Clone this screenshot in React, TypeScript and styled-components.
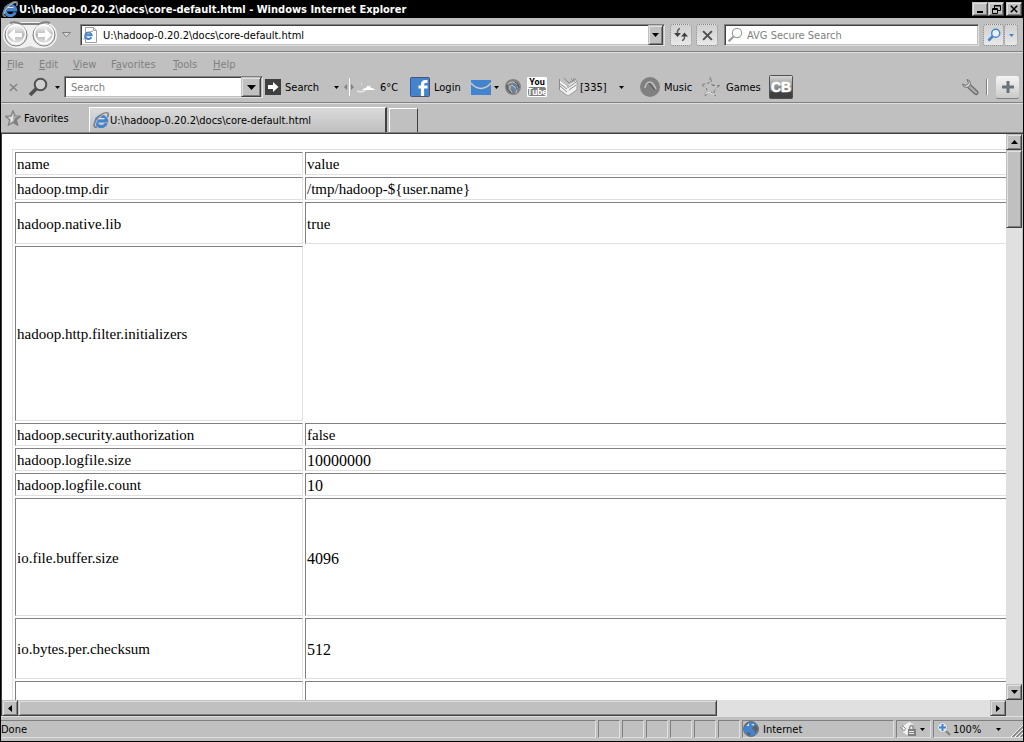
import React from "react";
import styled, { createGlobalStyle, css } from "styled-components";

const c = {
  face: "#c0c0c0",
  light: "#e0e0e0",
  shadow: "#808080",
  dark: "#404040",
  blue: "#4284d0",
};

const Global = createGlobalStyle`
  * { box-sizing: border-box; }
  html, body { margin: 0; height: 100%; }
  body, button, input {
    font-family: "DejaVu Sans Condensed", "Noto Sans", sans-serif;
    font-size: 11px;
    line-height: 15px;
    color: #000;
  }
  button { background: none; border: 0; padding: 0; }
  input { border: 0; padding: 0; outline: 0; background: none; min-width: 0; }
  svg { display: block; flex: none; }
`;

const raised = css`
  background: ${c.face};
  border: 1px solid;
  border-color: ${c.face} ${c.dark} ${c.dark} ${c.face};
  box-shadow: inset 1px 1px ${c.light}, inset -1px -1px ${c.shadow};
`;

const sunken = css`
  background: #fff;
  border: 1px solid;
  border-color: ${c.shadow} ${c.light} ${c.light} ${c.shadow};
  box-shadow: inset 1px 1px ${c.dark}, inset -1px -1px ${c.face};
`;

const Window = styled.div`
  display: flex;
  flex-direction: column;
  height: 100vh;
  overflow: hidden;
  background: ${c.face};
  border: solid #000;
  border-width: 0 1px 1px;
`;

const TitleBar = styled.header`
  display: flex;
  align-items: center;
  flex: none;
  height: 18px;
  padding: 0 0 0 1px;
  background: #000;
  color: #fff;
`;

const Title = styled.h1`
  flex: 1;
  margin: 0 0 0 1px;
  padding-top: 1px;
  font-size: 11px;
  line-height: 17px;
  font-weight: 700;
  white-space: nowrap;
`;

const CaptionButtons = styled.div`
  display: flex;
  padding-right: 1px;
`;

const CaptionButton = styled.button<{ $apart?: boolean }>`
  ${raised}
  display: grid;
  place-items: center;
  width: 16px;
  height: 14px;
  margin-left: ${(p) => (p.$apart ? 2 : 0)}px;
`;

const NavBar = styled.div`
  display: flex;
  align-items: center;
  flex: none;
  height: 35px;
  padding: 0 5px 0 2px;
  border-bottom: 1px solid ${c.light};
  box-shadow: inset 0 -1px ${c.shadow};
`;

const NavCluster = styled.div`
  display: flex;
  align-items: center;
  width: 77px;
`;

const Field = styled.label<{ $w?: number }>`
  ${sunken}
  display: flex;
  align-items: center;
  flex: ${(p) => (p.$w ? `0 1 ${p.$w}px` : "1 1 0")};
  height: 22px;
  min-width: 0;
  padding: 0 1px 0 2px;
`;

const FieldInput = styled.input`
  flex: 1;
  height: 18px;
  margin-left: 4px;
  padding-top: 1px;
  color: #000;
  &::placeholder { color: ${c.shadow}; opacity: 1; }
`;

const DropButton = styled.button<{ $w: number }>`
  ${raised}
  display: grid;
  place-items: center;
  flex: none;
  width: ${(p) => p.$w}px;
  height: 100%;
`;

const SoftButton = styled.button<{ $w: number }>`
  display: grid;
  place-items: center;
  flex: none;
  width: ${(p) => p.$w}px;
  height: 22px;
  border: 1px dotted ${c.shadow};
  border-radius: 3px;
  background: linear-gradient(#d0d0d0, #e8e8e8);
`;

const SoftGroup = styled.div`
  display: flex;
  margin-left: 4px;
`;

const NavActions = styled.div`
  display: flex;
  gap: 4px;
  padding: 0 6px 0 5px;
`;

const MenuBar = styled.nav`
  display: flex;
  flex: none;
  gap: 16px;
  height: 21px;
  padding: 4px 6px 0;
`;

const MenuItem = styled.button<{ $w: number }>`
  width: ${(p) => p.$w}px;
  height: 15px;
  text-align: left;
  color: ${c.shadow};
  white-space: nowrap;
`;

const ToolBar = styled.div`
  display: flex;
  align-items: center;
  flex: none;
  height: 30px;
  padding-right: 4px;
  padding-bottom: 3px;
  border-bottom: 1px solid ${c.light};
  box-shadow: inset 0 -1px ${c.shadow};
`;

const Tool = styled.button<{ $w: number; $gap?: number; $center?: boolean }>`
  display: flex;
  align-items: center;
  justify-content: ${(p) => (p.$center ? "center" : "flex-start")};
  gap: ${(p) => p.$gap ?? 4}px;
  flex: none;
  width: ${(p) => p.$w}px;
  height: 24px;
  padding-left: ${(p) => (p.$center ? 0 : 2)}px;
  white-space: nowrap;
`;

const ToolGroup = styled.div`
  display: flex;
  align-items: center;
  flex: none;
  margin-right: 9px;
`;

const Spacer = styled.div`
  flex: 1;
`;

const Divider = styled.span`
  width: 2px;
  height: 16px;
  margin: 0 8px 0 7px;
  background: ${c.shadow};
  border-right: 1px solid #fff;
`;

const AddButton = styled.button`
  display: grid;
  place-items: center;
  width: 23px;
  height: 23px;
  border-radius: 2px;
  border-bottom: 1px solid ${c.shadow};
  background: linear-gradient(#f4f4f4, #dcdcdc 60%, #c8c8c8);
`;

const TabStrip = styled.div`
  display: flex;
  align-items: flex-end;
  flex: none;
  height: 30px;
  border-bottom: 1px solid ${c.dark};
  box-shadow: inset 0 -1px ${c.shadow};
  padding-bottom: 1px;
`;

const FavoritesButton = styled.button`
  display: flex;
  align-items: center;
  gap: 3px;
  width: 88px;
  height: 28px;
  padding-left: 4px;
`;

const Tab = styled.button`
  display: flex;
  align-items: center;
  gap: 1px;
  width: 298px;
  height: 25px;
  padding-left: 3px;
  border-top: 1px solid #fff;
  border-left: 1px solid #fff;
  border-right: 2px solid ${c.dark};
  background: linear-gradient(#dadada, #c0c0c0);
  white-space: nowrap;
`;

const NewTab = styled.button`
  width: 29px;
  height: 24px;
  margin-left: 2px;
  border: solid;
  border-width: 1px 1px 0 1px;
  border-color: #fff ${c.dark} #fff #fff;
`;

const Content = styled.main`
  display: grid;
  grid-template-columns: minmax(0, 1fr) 17px;
  grid-template-rows: minmax(0, 1fr) 16px;
  flex: 1;
  min-height: 0;
  border-left: 1px solid ${c.dark};
`;

const Page = styled.div`
  overflow: hidden;
  background: #fff;
  padding: 15px 0 0 10px;
`;

const DataTable = styled.table`
  width: 1400px;
  table-layout: fixed;
  border: 1px solid;
  border-color: ${c.light} ${c.shadow} ${c.shadow} ${c.light};
  border-collapse: separate;
  border-spacing: 2px;
  font-family: "Liberation Serif", "Times New Roman", serif;
  font-size: 15px;
  line-height: 19px;
`;

const Row = styled.tr<{ $h: number }>`
  height: ${(p) => p.$h}px;
`;

const Cell = styled.td<{ $blank?: boolean; $numeric?: boolean }>`
  padding: 2px 1px 0;
  border: 1px solid;
  border-color: ${(p) =>
    p.$blank ? "transparent" : `${c.shadow} ${c.light} ${c.light} ${c.shadow}`};
  font-size: ${(p) => (p.$numeric ? 16 : 15)}px;
  text-align: left;
  font-weight: 400;
  vertical-align: middle;
`;

const NameCol = styled.col`
  width: 288px;
`;

const Scrollbar = styled.div<{ $vertical?: boolean }>`
  display: flex;
  flex-direction: ${(p) => (p.$vertical ? "column" : "row")};
  background: ${c.light};
  ${(p) => p.$vertical && css`border-right: 1px solid ${c.face};`}
`;

const ScrollButton = styled.button`
  ${raised}
  display: grid;
  place-items: center;
  flex: none;
  width: 16px;
  height: 16px;
`;

const ScrollThumb = styled.div<{ $share: string }>`
  ${raised}
  flex: 0 0 ${(p) => p.$share};
`;

const StatusBar = styled.footer`
  display: flex;
  flex: none;
  gap: 2px;
  height: 25px;
  padding: 3px 0;
  border-top: 1px solid ${c.light};
`;

const Panel = styled.div<{ $w?: number }>`
  display: flex;
  align-items: center;
  gap: 4px;
  flex: ${(p) => (p.$w ? `none` : "1 1 0")};
  width: ${(p) => (p.$w ? `${p.$w}px` : "auto")};
  border: 1px solid;
  border-color: ${c.shadow} ${c.light} ${c.light} ${c.shadow};
  white-space: nowrap;
`;

const DonePanel = styled(Panel)`
  border-left: 0;
`;

const PanelButton = styled.button<{ $w: number }>`
  display: flex;
  align-items: center;
  gap: 2px;
  width: ${(p) => p.$w}px;
  height: 16px;
  padding: 0 5px 0 3px;
  & > svg:last-child { margin-left: auto; }
`;

const ZoomPanel = styled(Panel)`
  border-right: 0;
  justify-content: space-between;
`;

const Caret = ({ size = 5, dir = "down", fill = "#000" }: { size?: number; dir?: "down" | "up" | "left" | "right"; fill?: string }) => {
  const h = (size + 1) / 2;
  const flat = dir === "down" || dir === "up";
  const d = {
    down: `M0 0H${size}L${size / 2} ${h}Z`,
    up: `M0 ${h}H${size}L${size / 2} 0Z`,
    left: `M${h} 0V${size}L0 ${size / 2}Z`,
    right: `M0 0V${size}L${h} ${size / 2}Z`,
  }[dir];
  return (
    <svg width={flat ? size : h} height={flat ? h : size} aria-hidden="true">
      <path d={d} fill={fill} />
    </svg>
  );
};

const IeIcon = ({ size = 16 }: { size?: number }) => (
  <svg width={size} height={size} viewBox="0 0 16 16" aria-hidden="true">
    <path d="M13.300 11.300A5.200 5.200 0 1 1 13.600 8.800H5" fill="none" stroke={c.blue} strokeWidth="3.200" />
    <path d="M5 6.600h6.500" stroke="#e0e0e0" strokeWidth="1.200" />
    <path d="M4 15.200C0 16 .2 10.800 4.800 5.800 9 1.400 14 0 15 1.600c.6 1 .1 2.200-.6 3.400" fill="none" stroke="#808080" strokeWidth="1.800" />
    <path d="M2.600 13C2.200 10.600 5 6.600 8.500 3.800 11 1.800 13.400 1.200 14.300 2" fill="none" stroke="#d8d8d8" strokeWidth=".8" />
  </svg>
);

const PageIcon = () => (
  <svg width="16" height="16" viewBox="0 0 16 16" aria-hidden="true">
    <path d="M2.500.5h8l3 3v12h-11z" fill="#fff" stroke="#a0a0a0" />
    <path d="M10.500.5v3h3" fill="none" stroke="#a0a0a0" />
    <path d="M8.300 10.200A3.200 3.200 0 1 1 8.600 8.200H3" fill="none" stroke={c.blue} strokeWidth="2" />
    <path d="M1 12.500C1 9 6 4.500 10 4" fill="none" stroke="#909090" />
  </svg>
);

const BackForward = () => (
  <svg width="54" height="28" viewBox="0 0 54 28" aria-hidden="true">
    <defs>
      <linearGradient id="orb" x1="0" y1="0" x2="0" y2="1">
        <stop offset="0" stopColor="#fff" />
        <stop offset=".5" stopColor="#b8b8b8" />
        <stop offset="1" stopColor="#f4f4f4" />
      </linearGradient>
    </defs>
    <path d="M13 1h28a13 13 0 0 1 0 26q-6 1-14-2-8 3-14 2a13 13 0 0 1 0-26z" fill="#f0f0f0" />
    <path d="M7 2q5-2 11 1h18q6-3 11-1" fill="none" stroke="#808080" strokeWidth="2" />
    {[13, 41].map((x) => (
      <g key={x}>
        <circle cx={x} cy="14" r="11" fill="url(#orb)" stroke="#808080" />
        <circle cx={x} cy="13" r="9.500" fill="none" stroke="#fff" strokeWidth="1.500" />
      </g>
    ))}
    <path d="M5 14l7-6.500v4.500h7v4h-7v4.500z" fill="#fff" />
    <path d="M49 14l-7-6.500v4.500h-7v4h7v4.500z" fill="#fff" />
  </svg>
);

const Magnifier = ({ size, ring, glass = "none", width = 2 }: { size: number; ring: string; glass?: string; width?: number }) => (
  <svg width={size} height={size} viewBox="0 0 20 20" aria-hidden="true">
    <path d="M8.500 11.500L2 18" stroke={ring} strokeWidth={width * 1.900} />
    <circle cx="12.500" cy="7.500" r="5.800" fill={glass} stroke={ring} strokeWidth={width} />
  </svg>
);

const Refresh = () => (
  <svg width="16" height="16" viewBox="0 0 16 16" aria-hidden="true">
    <path d="M7 1.500Q4.500 2.500 4.500 5v2M9 13.500q2.500-.5 2.500-3.500V8" fill="none" stroke="#606060" strokeWidth="1.500" />
    <path d="M1 6h7l-3.500 4zM8 9.500h7L11.500 5.500z" fill="#404040" />
  </svg>
);

const Cross = ({ size, color, width = 2 }: { size: number; color: string; width?: number }) => (
  <svg width={size} height={size} viewBox="0 0 10 10" aria-hidden="true">
    <path d="M1 1l8 8M9 1l-8 8" stroke={color} strokeWidth={width} />
  </svg>
);

const GoIcon = () => (
  <svg width="16" height="16" aria-hidden="true">
    <path d="M0 0h16v16H0z" fill="#404040" />
    <path d="M3 6h5V3l5.500 5L8 13v-3H3z" fill="#fff" />
  </svg>
);

const Splitter = () => (
  <svg width="10" height="20" aria-hidden="true">
    <path d="M5.500 1v18" stroke="#fff" />
    <path d="M0 10l3-3v6zM10 10L7 7v6z" fill="#808080" />
  </svg>
);

const Cloud = () => (
  <svg width="19" height="16" aria-hidden="true">
    <path d="M0 12q4 2 9-1" fill="none" stroke="#e0e0e0" strokeWidth="2" />
    <path d="M5 11q2-2 4-2 1-3 3-2 2 0 2 2 3 0 4 2z" fill="#fff" />
    <path d="M4.500 4v2" stroke="#e0e0e0" />
  </svg>
);

const Facebook = () => (
  <svg width="20" height="20" aria-hidden="true">
    <rect x=".5" y=".5" width="19" height="19" rx="1" fill={c.blue} stroke="#505070" />
    <path d="M17.500 4.500h-2q-3 0-3 3.500V19M8.500 10H17.500" fill="none" stroke="#fff" strokeWidth="3.200" />
  </svg>
);

const Mail = () => (
  <svg width="20" height="15" aria-hidden="true">
    <path d="M0 0h20v15H0z" fill={c.blue} />
    <path d="M0 3q4 5 10 5.500Q16 8 20 3" fill="none" stroke="#c8c8c8" strokeWidth="1.500" />
  </svg>
);

const Swirl = () => (
  <svg width="16" height="16" aria-hidden="true">
    <circle cx="8" cy="8" r="8" fill="#808080" />
    <path d="M3 5q4-4 9 0M4 8q5-4 9 1M8 7q5 2 3 7M5 8q-1 3 2 5" fill="none" stroke="#c8c8c8" />
    <path d="M8 6q4 0 4 5M6 10l3 3" fill="none" stroke={c.blue} strokeWidth="1.500" />
    <path d="M2 6q-1 5 4 8M10 3q4 2 4 6" fill="none" stroke="#505050" />
  </svg>
);

const YouTube = () => (
  <svg width="20" height="20" aria-hidden="true">
    <rect width="20" height="20" rx="1" fill="#fff" />
    <rect x="1" y="10" width="18" height="9" rx="2" fill="#808080" />
    <g fontFamily="Liberation Sans Narrow, Roboto, sans-serif" fontWeight="700" fontSize="9" textAnchor="middle">
      <text x="10" y="8">You</text>
      <text x="10" y="18" fill="#fff">Tube</text>
    </g>
  </svg>
);

const News = () => (
  <svg width="21" height="20" aria-hidden="true">
    <path d="M1 3l8 6 10-6v9l-9 7-9-7z" fill="#f0f0f0" />
    <path d="M1.500 2v11M1 6l8 6M2 9l7 6M6 1l5 5 6-4M11 10l7-5M11 13l7-5M10 8v3" fill="none" stroke="#808080" strokeWidth=".9" />
    <path d="M1.500 13l8.500 6 9-6V4" fill="none" stroke="#a0a0a0" />
    <path d="M13 2h6M14 4h6" stroke="#808080" strokeDasharray="1 1" />
  </svg>
);

const Music = () => (
  <svg width="20" height="20" aria-hidden="true">
    <circle cx="10" cy="10" r="10" fill="#808080" />
    <path d="M5 11q1-6 5-6 3 0 6 7" fill="none" stroke="#c0c0c0" strokeWidth="1.500" />
    <path d="M9 6q2 3 6 7" fill="none" stroke="#505050" />
  </svg>
);

const GamesStar = () => (
  <svg width="20" height="20" aria-hidden="true">
    <path d="M9.500 0L8 6 1 7.500M1 8l5 4-2.500 7M4 19l4-3M10 2l1 6h3M11 8.500h8M18 9l-4 4M13 13l1 6M10 15l5 4" fill="none" stroke="#808080" strokeDasharray="3 2" />
    <path d="M4 17l4-2 5 3" fill="none" stroke="#e0e0e0" />
  </svg>
);

const FavoritesStar = () => (
  <svg width="16" height="16" viewBox="0 0 20 20" aria-hidden="true">
    <path d="M10 1l2.700 6.200 6.800.6-5.200 4.500 1.600 6.700-5.900-3.500L4.100 19l1.600-6.700L.5 7.800l6.800-.6z" fill="#b0b0b0" stroke="#808080" strokeWidth="1.400" />
    <path d="M10 5l-1.500 4-4 .3 3 2.700-.8 3.500 3.300-2.500z" fill="#e8e8e8" />
    <path d="M10 15.500l6 3.500-1.700-6.500 5.200-4.700-6.500 2z" fill="#808080" />
  </svg>
);

const CbLogo = () => (
  <svg width="24" height="24" aria-hidden="true">
    <defs>
      <linearGradient id="cb" x1="0" y1="0" x2="0" y2="1">
        <stop offset="0" stopColor="#d8d8d8" />
        <stop offset=".6" stopColor="#808080" />
        <stop offset=".75" stopColor="#404040" />
      </linearGradient>
    </defs>
    <rect x=".5" y=".5" width="23" height="23" rx="1" fill="url(#cb)" stroke="#505050" />
    <text x="12" y="17" textAnchor="middle" fontFamily="Liberation Sans, sans-serif" fontWeight="700" fontSize="14" fill="#fff" stroke="#fff" strokeWidth=".6">CB</text>
  </svg>
);

const Wrench = () => (
  <svg width="18" height="18" aria-hidden="true">
    <path d="M8 8l7 6.500" stroke="#606060" strokeWidth="5" strokeLinecap="round" />
    <path d="M8 8l7 6.500" stroke="#a8a8a8" strokeWidth="3" strokeLinecap="round" />
    <path d="M6 1.500a4 4 0 1 1-4.500 4.500l3.500 1.500L7.500 5z" fill="#d8d8d8" stroke="#707070" />
  </svg>
);

const Plus = () => (
  <svg width="12" height="12" aria-hidden="true">
    <path d="M6 0v12M0 6h12" stroke="#707070" strokeWidth="3" />
    <path d="M5 5h2v2H5z" fill={c.blue} />
  </svg>
);

const Globe = () => (
  <svg width="16" height="16" aria-hidden="true">
    <circle cx="8" cy="8" r="7.500" fill={c.blue} stroke="#707070" />
    <path d="M2 5q1-3 4-4l-1 3-2 2zM10 6l3-2 2 4-3 4-1-3-2-1zM4 11l4 1-1 3-3-2z" fill="#606060" />
    <path d="M3 5l3-3v3zM8 3h3v2z" fill="#e0e0e0" />
  </svg>
);

const Lock = () => (
  <svg width="17" height="16" aria-hidden="true">
    <path d="M3 5l6-4 4 2-2 7-4 4-4-3z" fill="#f0f0f0" />
    <path d="M0 6l4 4 2-3M2 4l3 3" fill="none" stroke="#909090" />
    <path d="M9.500 8V6.500q2-4 4 0V8" fill="none" stroke="#909090" strokeWidth="1.500" />
    <path d="M8 8h8v7H8z" fill="#808080" />
    <path d="M9 10.500h5M9 12.500h5" stroke="#e8e8e8" />
  </svg>
);

const ZoomIcon = () => (
  <svg width="14" height="14" aria-hidden="true">
    <path d="M8 8l5 5" stroke="#808080" strokeWidth="2" />
    <circle cx="5.500" cy="5.500" r="5" fill="#e8e8e8" stroke="#b0b0b0" />
    <path d="M5.500 2v7M2 5.500h7" stroke={c.blue} strokeWidth="2" />
  </svg>
);

const Grip = () => (
  <svg width="12" height="16" aria-hidden="true">
    <path d="M0 16L12 4M4 16l8-8M8 16l4-4" stroke="#fff" />
    <path d="M1.500 16L12 5.500M5.500 16L12 9.500M9.500 16l2.500-2.500" stroke="#808080" strokeWidth="1.500" />
  </svg>
);

const menus: [string, string, string, number][] = [
  ["", "F", "ile", 16],
  ["", "E", "dit", 18],
  ["", "V", "iew", 22],
  ["F", "a", "vorites", 46],
  ["", "T", "ools", 24],
  ["", "H", "elp", 22],
];

const rows: [string, string, number][] = [
  ["hadoop.tmp.dir", "/tmp/hadoop-${user.name}", 23],
  ["hadoop.native.lib", "true", 42],
  ["hadoop.http.filter.initializers", "", 175],
  ["hadoop.security.authorization", "false", 23],
  ["hadoop.logfile.size", "10000000", 23],
  ["hadoop.logfile.count", "10", 23],
  ["io.file.buffer.size", "4096", 118],
  ["io.bytes.per.checksum", "512", 61],
  ["", "", 61],
];

export default function App() {
  return (
    <Window>
      <Global />
      <TitleBar>
        <IeIcon />
        <Title>U:\hadoop-0.20.2\docs\core-default.html - Windows Internet Explorer</Title>
        <CaptionButtons>
          <CaptionButton aria-label="Minimize">
            <svg width="8" height="8"><path d="M1 6h6v2H1z" /></svg>
          </CaptionButton>
          <CaptionButton aria-label="Restore">
            <svg width="9" height="9" fill="none" stroke="#000">
              <path d="M2.500 3V.5h6v5H6M2.500 1h6M.5 3.500h5v5h-5zM.5 4.500h5" />
            </svg>
          </CaptionButton>
          <CaptionButton aria-label="Close" $apart>
            <Cross size={8} color="#000" />
          </CaptionButton>
        </CaptionButtons>
      </TitleBar>

      <NavBar>
        <NavCluster>
          <Tool $w={54} $center aria-label="Back and forward"><BackForward /></Tool>
          <Tool $w={18} $center aria-label="Recent pages">
            <svg width="9" height="6"><path d="M.5.5h8L4.500 5z" fill="#d8d8d8" stroke="#808080" /></svg>
          </Tool>
        </NavCluster>
        <Field>
          <PageIcon />
          <FieldInput aria-label="Address" defaultValue="U:\hadoop-0.20.2\docs\core-default.html" />
          <DropButton $w={15} aria-label="Show addresses"><Caret size={7} /></DropButton>
        </Field>
        <NavActions>
          <SoftButton $w={22} aria-label="Refresh"><Refresh /></SoftButton>
          <SoftButton $w={22} aria-label="Stop"><Cross size={11} color="#505050" width={1.8} /></SoftButton>
        </NavActions>
        <Field $w={255}>
          <Magnifier size={16} ring="#a0a0a0" width={1.5} />
          <FieldInput aria-label="Search the web" placeholder="AVG Secure Search" />
        </Field>
        <SoftGroup>
          <SoftButton $w={21} aria-label="Search"><Magnifier size={14} ring={c.blue} glass="#e8f0f8" /></SoftButton>
          <SoftButton $w={14} aria-label="Search options"><Caret fill={c.blue} /></SoftButton>
        </SoftGroup>
      </NavBar>

      <MenuBar>
        {menus.map(([pre, key, post, w]) => (
          <MenuItem key={key + post} $w={w}>{pre}<u>{key}</u>{post}</MenuItem>
        ))}
      </MenuBar>

      <ToolBar>
        <Tool $w={24} $center aria-label="Close toolbar"><Cross size={9} color={c.shadow} width={1.5} /></Tool>
        <Tool $w={26} $center aria-label="Toolbar menu"><Magnifier size={20} ring="#505050" glass="#d0d0d0" /></Tool>
        <Tool $w={13} $center aria-label="Toolbar options"><Caret /></Tool>
        <Field $w={199}>
          <FieldInput aria-label="Toolbar search" placeholder="Search" />
          <DropButton $w={20} aria-label="Search history"><Caret size={9} /></DropButton>
        </Field>
        <Tool $w={66}><GoIcon />Search</Tool>
        <Tool $w={14} $center aria-label="Search kinds"><Caret /></Tool>
        <Tool $w={12} $center aria-label="Resize"><Splitter /></Tool>
        <Tool $w={53}><Cloud />6°C</Tool>
        <Tool $w={61}><Facebook />Login</Tool>
        <Tool $w={22} aria-label="Mail"><Mail /></Tool>
        <Tool $w={10} $center aria-label="Mail options"><Caret /></Tool>
        <ToolGroup>
          <Tool $w={24} $center aria-label="Browser"><Swirl /></Tool>
          <Tool $w={22} aria-label="YouTube"><YouTube /></Tool>
        </ToolGroup>
        <ToolGroup>
          <Tool $w={58} $gap={1}><News />[335]</Tool>
          <Tool $w={15} $center aria-label="Headlines"><Caret /></Tool>
        </ToolGroup>
        <Tool $w={61}><Music />Music</Tool>
        <Tool $w={68} $gap={5}><GamesStar />Games</Tool>
        <Tool $w={28} aria-label="CB"><CbLogo /></Tool>
        <Spacer />
        <Tool $w={18} $center aria-label="Settings"><Wrench /></Tool>
        <Divider />
        <AddButton aria-label="Add"><Plus /></AddButton>
      </ToolBar>

      <TabStrip>
        <FavoritesButton><FavoritesStar />Favorites</FavoritesButton>
        <Tab><IeIcon />U:\hadoop-0.20.2\docs\core-default.html</Tab>
        <NewTab aria-label="New tab" />
      </TabStrip>

      <Content>
        <Page>
          <DataTable>
            <colgroup><NameCol /><col /></colgroup>
            <thead>
              <Row $h={23}>
                <Cell as="th" scope="col">name</Cell>
                <Cell as="th" scope="col">value</Cell>
              </Row>
            </thead>
            <tbody>
              {rows.map(([name, value, h], i) => (
                <Row key={i} $h={h}>
                  <Cell>{name}</Cell>
                  <Cell $blank={!!name && !value} $numeric={/^\d+$/.test(value)}>{value}</Cell>
                </Row>
              ))}
            </tbody>
          </DataTable>
        </Page>
        <Scrollbar $vertical>
          <ScrollButton aria-label="Scroll up"><Caret size={7} dir="up" /></ScrollButton>
          <ScrollThumb $share="13.8%" />
          <Spacer />
          <ScrollButton aria-label="Scroll down"><Caret size={7} /></ScrollButton>
        </Scrollbar>
        <Scrollbar>
          <ScrollButton aria-label="Scroll left"><Caret size={7} dir="left" /></ScrollButton>
          <ScrollThumb $share="69.6%" />
          <Spacer />
          <ScrollButton aria-label="Scroll right"><Caret size={7} dir="right" /></ScrollButton>
        </Scrollbar>
      </Content>

      <StatusBar>
        <DonePanel>Done</DonePanel>
        {[0, 1, 2, 3, 4, 5].map((i) => <Panel key={i} $w={22} />)}
        <Panel $w={152}><Globe />Internet</Panel>
        <Panel $w={35}>
          <PanelButton $w={33} aria-label="Protection"><Lock /><Caret /></PanelButton>
        </Panel>
        <ZoomPanel $w={90}>
          <PanelButton $w={72}><ZoomIcon />100%<Caret /></PanelButton>
          <Grip />
        </ZoomPanel>
      </StatusBar>
    </Window>
  );
}
